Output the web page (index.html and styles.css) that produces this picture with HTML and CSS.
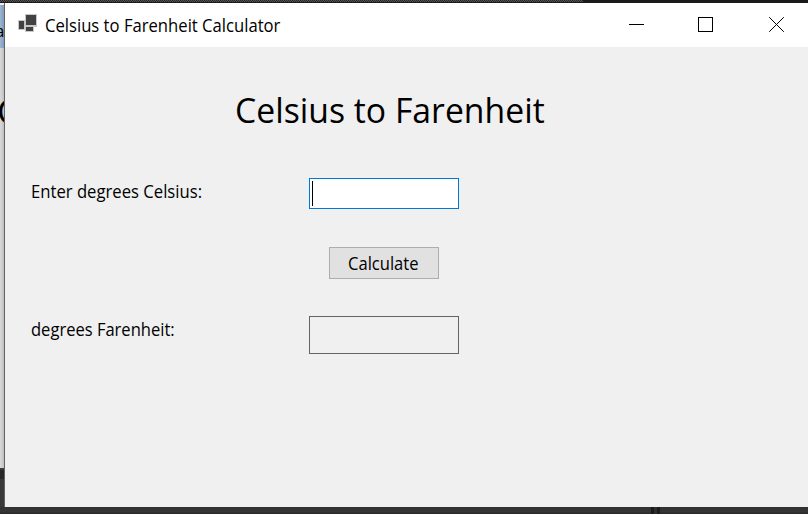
FILE: index.html
```
<!DOCTYPE html>
<html lang="en">
<head>
<meta charset="utf-8">
<title>Celsius to Farenheit Calculator</title>
<link rel="stylesheet" href="styles.css">
</head>
<body>
<div class="desktop">
  <div class="top-edge"><span class="hatch"></span></div>
  <div class="behind">
    <div class="behind-title"><span class="behind-a">a</span></div>
    <div class="behind-body"><span class="behind-c">C</span></div>
    <div class="behind-gap"></div>
    <div class="behind-shade"></div>
  </div>
  <main class="window">
    <header class="titlebar">
      <svg class="app-icon" width="20" height="19" viewBox="0 0 20 19" shape-rendering="crispEdges">
        <path fill="#c8c8c8" d="M7 0h12v13h-3v5H7v-2H0V6h7z"/>
        <path fill="#424242" d="M8 1h10v10H8zM1 7h5v8H1zM8 13h7v4H8z"/>
      </svg>
      <span class="caption"><span class="fit fit-caption">Celsius to Farenheit Calculator</span></span>
      <svg class="controls" width="172" height="44" viewBox="0 0 172 44" fill="none" stroke="#000">
        <path d="M1 21.5h15M70.500 14.500h14v14h-14z" shape-rendering="crispEdges"/>
        <path d="M141.200 14.200l14.600 14.600M155.800 14.200l-14.600 14.600"/>
      </svg>
    </header>
    <form class="form">
      <h1 class="heading"><span class="fit fit-heading">Celsius to Farenheit</span></h1>
      <div class="row row-input">
        <span class="label"><span class="fit fit-enter">Enter degrees Celsius:</span></span>
        <div class="textbox"><span class="caret"></span></div>
      </div>
      <button class="calculate" type="button"><span class="fit fit-button">Calculate</span></button>
      <div class="row row-output">
        <span class="label"><span class="fit fit-result">degrees Farenheit:</span></span>
        <div class="result"></div>
      </div>
    </form>
  </main>
  <div class="bottom-edge"></div>
</div>
</body>
</html>
```
FILE: styles.css
```
* { box-sizing: border-box; }
body { margin: 0; overflow: hidden; background: #333; font-family: "Open Sans", "Noto Sans", sans-serif; color: #000; }
.desktop { width: 808px; height: 514px; display: grid; grid-template-columns: 5px 803px; grid-template-rows: 3px 504px 7px; }
.top-edge { grid-column: 1 / 3; background: #1b1a1b; }
.hatch { display: block; width: 583px; height: 2px; background: repeating-conic-gradient(#555 0 25%, #252525 0 50%) 0 0 / 2px 2px; }
.behind { display: flex; flex-direction: column; overflow: hidden; border-right: 1px solid #626262; background: #383838; }
.behind-title { height: 45px; border-top: 2px solid #eee; background: linear-gradient(90deg, #9db5d3, #819bb8); overflow: hidden; }
.behind-a { display: block; margin: 14px 0 0 -5px; font-size: 17px; line-height: 24px; }
.behind-body { height: 420px; background: linear-gradient(90deg, #d9dadb, #bfc0c1); overflow: hidden; }
.behind-c { display: block; margin: 39px 0 0 -3px; font-size: 35px; line-height: 48px; }
.behind-gap { height: 2px; background: #3a3a3a; }
.behind-shade { height: 9px; background: #272727; }
.window { background: #f0f0f0; }
.titlebar { height: 44px; background: #fff; display: flex; align-items: flex-start; padding-left: 13px; }
.app-icon { margin-top: 11px; flex: none; }
.caption { margin: 10px 0 0 7px; width: 575px; font-size: 17.5px; line-height: 24px; white-space: nowrap; }
.controls { flex: none; margin-left: 8px; }
.fit { display: inline-block; transform-origin: 0 50%; white-space: nowrap; }
.fit-caption { transform: scaleX(.951); }
.fit-heading { transform: scaleX(.964); }
.fit-enter { transform: scaleX(.952); }
.fit-button { transform: scaleX(.946); }
.fit-result { transform: scaleX(.945); }
.form { display: flex; flex-direction: column; align-items: flex-start; padding: 39px 0 0 26px; }
.heading { margin: 0 0 0 204px; height: 48px; font-size: 35px; line-height: 48px; font-weight: 400; }
.row { display: grid; grid-template-columns: 278px 150px; }
.row-input { margin-top: 44px; }
.label { font-size: 17.5px; line-height: 26px; height: 26px; }
.textbox { height: 31px; padding: 2px; border: 1px solid #0078d7; background: #fff; display: flex; }
.caret { width: 1px; height: 25px; background: #000; }
.calculate { margin: 38px 0 0 298px; width: 110px; height: 32px; padding: 0 0 0 18px; border: 1px solid #adadad; background: #e1e1e1; color: #000; font: 17.5px/30px "Open Sans", "Noto Sans", sans-serif; text-align: left; }
.row-output { margin-top: 37px; }
.result { height: 38px; border: 1px solid #646464; }
.bottom-edge { grid-column: 1 / 3; background: linear-gradient(90deg, transparent 651px, #1b1b1b 651px 654px, #2d2d2d 654px 657px, #1b1b1b 657px 660px, transparent 660px), linear-gradient(#303030, #363636 5px, #2d282a 6px); }
```
